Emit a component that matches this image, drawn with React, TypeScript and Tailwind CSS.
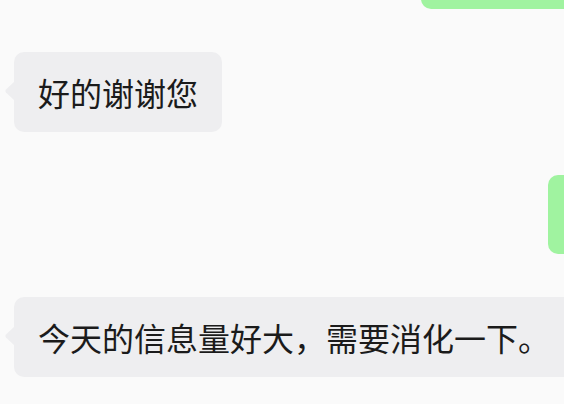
import React from 'react';

const font = { fontFamily: '"Noto Sans CJK SC", "Noto Sans", sans-serif' };

const Incoming: React.FC<{ text: string }> = ({ text }) => (
  <div className="relative ml-[14px] flex h-[80px] w-max items-center rounded-[10px] bg-[#eeeef0] px-6">
    <svg className="absolute left-[-10px] top-[29px]" width="11" height="20" viewBox="0 0 11 20">
      <path d="M11 0 L11 20 L2 11.5 Q0.6 10 2 8.5 Z" fill="#eeeef0" />
    </svg>
    <span className="whitespace-nowrap text-[32px] leading-[32px] text-[#1b1b1b]">{text}</span>
  </div>
);

export default function App() {
  return (
    <div className="h-[404px] w-[564px] overflow-hidden bg-[#fafafa]" style={font}>
      <div className="flex flex-col gap-[43px]">
        <div className="-mt-[71px] ml-[421px] h-[80px] w-[200px] shrink-0 rounded-[10px] bg-[#a0f3a0]" />
        <Incoming text="好的谢谢您" />
        <div className="ml-[548px] h-[79px] w-[120px] shrink-0 rounded-[10px] bg-[#a0f3a0]" />
        <Incoming text="今天的信息量好大，需要消化一下。" />
      </div>
    </div>
  );
}
